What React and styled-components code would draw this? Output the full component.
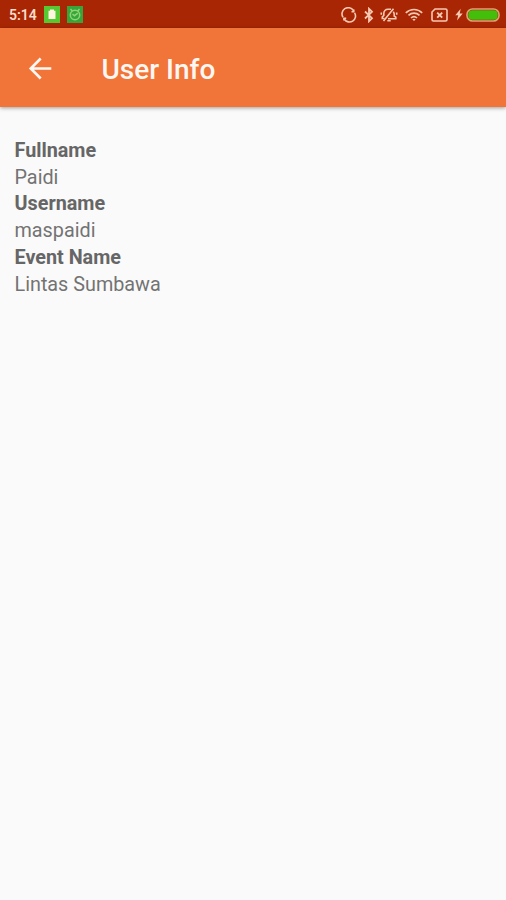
import React from 'react';
import styled, { createGlobalStyle } from 'styled-components';

const StatusRed = '#a92604';
const AppOrange = '#f17439';
const IconCream = '#f6c9b3';

const GlobalStyle = createGlobalStyle`
  * {
    box-sizing: border-box;
  }

  body {
    margin: 0;
    background: #fafafa;
    font-family: Roboto, sans-serif;
  }
`;

const Screen = styled.div`
  display: flex;
  flex-direction: column;
  width: 100%;
  height: 100vh;
  background: #fafafa;
`;

const StatusBar = styled.div`
  display: flex;
  align-items: center;
  height: 28px;
  padding: 1px 6px 0 9px;
  background: ${StatusRed};
`;

const Clock = styled.span`
  width: 35px;
  font-size: 14px;
  font-weight: 600;
  line-height: 28px;
  color: #fbdccb;
`;

const AppBadge = styled.span`
  display: flex;
  align-items: center;
  justify-content: center;
  width: 16px;
  height: 17px;
  margin-right: 7px;
  background: ${({ color }) => color};
`;

const StatusIcons = styled.div`
  display: flex;
  align-items: center;
  margin-left: auto;
`;

const StatusIcon = styled.svg`
  display: block;
  flex: none;
  margin-right: ${({ $gap }) => $gap || 0}px;
  fill: none;
  stroke: ${IconCream};
  stroke-width: 1.6;
`;

const Toolbar = styled.header`
  position: relative;
  display: flex;
  align-items: center;
  height: 79px;
  padding: 2px 27px 0;
  background: ${AppOrange};
  box-shadow: 0 1px 4px rgba(0, 0, 0, 0.38);
`;

const BackButton = styled.button`
  display: flex;
  width: 26px;
  height: 26px;
  margin-right: 48.5px;
  padding: 0;
  border: 0;
  background: none;
`;

const Title = styled.h1`
  margin: 0;
  padding-top: 2px;
  font-size: 28px;
  font-weight: 500;
  line-height: 32px;
  color: #fff7f1;
`;

const Details = styled.dl`
  margin: 0;
  padding: 31px 14.5px;
  font-size: 19.8px;
  line-height: 26.7px;
  color: #737373;
`;

const Label = styled.dt`
  font-weight: 700;
  color: #666;
`;

const Value = styled.dd`
  margin: 0;
`;

const fields = [
  { label: 'Fullname', value: 'Paidi' },
  { label: 'Username', value: 'maspaidi' },
  { label: 'Event Name', value: 'Lintas Sumbawa' },
];

function Notifications() {
  return (
    <>
      <AppBadge color="#55c832">
        <svg width="16" height="17" viewBox="0 0 16 17">
          <path d="M6 3.500h4v1.200h1.500v8.300h-7V4.700H6z" fill="#fff6df" />
        </svg>
      </AppBadge>
      <AppBadge color="#36a63b">
        <svg width="16" height="17" viewBox="0 0 16 17" fill="none" stroke="#8fd474" strokeWidth="1.5">
          <path d="M3.500 3l2 2.200M12.500 3l-2 2.200M5.500 8.200l2 1.500 3.300-2.500" />
          <circle cx="8" cy="9" r="4.700" />
        </svg>
      </AppBadge>
    </>
  );
}

function SystemIcons() {
  return (
    <StatusIcons>
      <StatusIcon width="16" height="16" $gap={7}>
        <path d="M2 10.200A6 6 0 0 1 12.300 3.500M13.600 5.800A6 6 0 0 1 3.400 12.200" />
        <path d="M12.800 2.500v2.300h-2.300M2.900 13.500v-2.300h2.300" />
      </StatusIcon>
      <StatusIcon width="10" height="16" $gap={6}>
        <path d="M1 4.500l7 6.700-3 3V1.800l3 3-7 6.700" strokeWidth="1.800" />
      </StatusIcon>
      <StatusIcon width="18" height="16" $gap={7}>
        <path d="M4.500 11.500H2.300V9.800l1.500-1.300V6.500C3.800 4 5.500 2.300 8 2.300h3M13.300 4.700c.6.800.9 1.500.9 2.300v2l1.600 1.200v1.600H8" />
        <path d="M3.500 14L13.500 1.800M7.300 13.800h3.400M1.300 5.500v2.200M16.700 5.500v2.200" />
      </StatusIcon>
      <StatusIcon width="18" height="14" $gap={8}>
        <path d="M.8 4.800c4.700-4.400 11.700-4.400 16.400 0M3.500 7.400c3.200-3 7.800-3 11 0M6 10c1.800-1.600 4.200-1.600 6 0" />
        <path d="M7.300 11.300c1-.8 2.400-.8 3.400 0L9 13z" fill={IconCream} stroke="none" />
      </StatusIcon>
      <StatusIcon width="17" height="14" $gap={7}>
        <path d="M4 1h10.500q1.500 0 1.500 1.500v9q0 1.500-1.500 1.500h-12Q1 13 1 11.500V4z" />
        <path d="M6.200 4.700l5 5M11.200 4.700l-5 5" strokeWidth="1.900" />
      </StatusIcon>
      <StatusIcon width="8" height="13" $gap={3}>
        <path d="M5.700.7L.3 7.300h2.900L2 12.400l5.700-7H4.700z" fill={IconCream} stroke="none" />
      </StatusIcon>
      <StatusIcon width="34" height="14">
        <rect x="1" y="1" width="32" height="12" rx="5.500" stroke="#dfa374" />
        <rect x="2.300" y="2.300" width="29.400" height="9.400" rx="4" fill="#43be0b" stroke="none" />
      </StatusIcon>
    </StatusIcons>
  );
}

function App() {
  return (
    <Screen>
      <GlobalStyle />
      <StatusBar>
        <Clock>5:14</Clock>
        <Notifications />
        <SystemIcons />
      </StatusBar>
      <Toolbar>
        <BackButton aria-label="Back">
          <svg width="26" height="26" viewBox="0 0 26 26" fill="none" stroke="#fff7f1" strokeWidth="2.600">
            <path d="M24.300 12.500H4M13.700 2.500l-10 10 10 10" />
          </svg>
        </BackButton>
        <Title>User Info</Title>
      </Toolbar>
      <Details>
        {fields.map(({ label, value }) => (
          <React.Fragment key={label}>
            <Label>{label}</Label>
            <Value>{value}</Value>
          </React.Fragment>
        ))}
      </Details>
    </Screen>
  );
}

export default App;
